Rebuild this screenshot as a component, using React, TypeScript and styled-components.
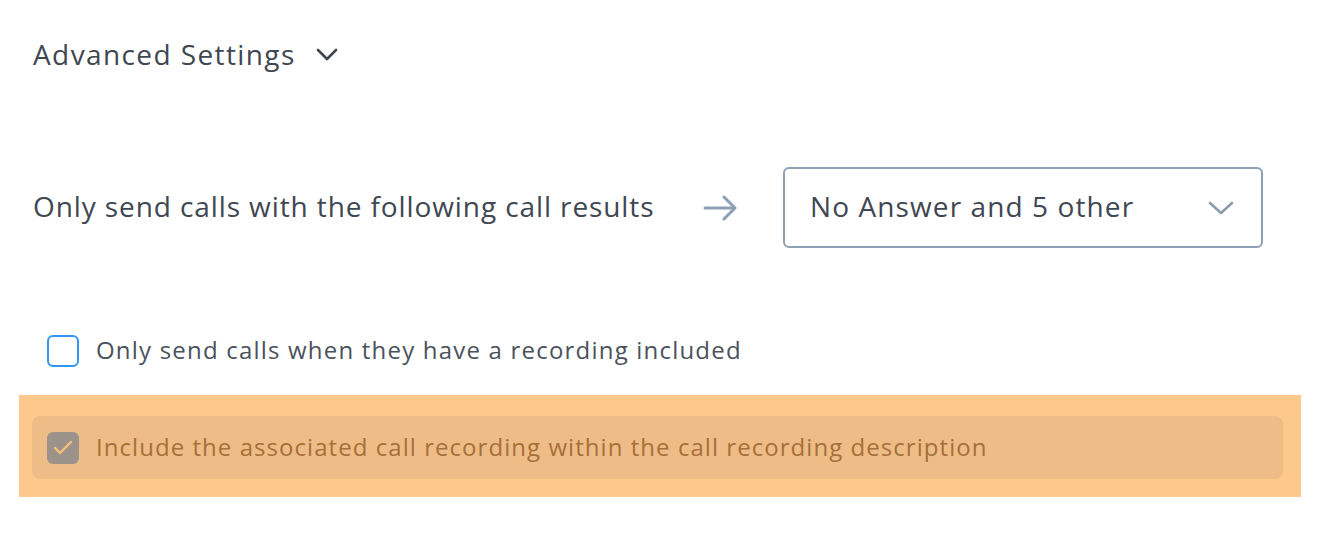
import React from "react";
import styled, { createGlobalStyle } from "styled-components";

const GlobalStyle = createGlobalStyle`
  body {
    margin: 0;
    background: #ffffff;
    font-family: "Open Sans", Lato, sans-serif;
    color: #3e4752;
  }
`;

const App = () => {
    return (
        <>
            <GlobalStyle />
            <Page>
                <Header>
                    <HeaderTitle>Advanced Settings</HeaderTitle>
                    <svg width="22" height="14" viewBox="0 0 22 14">
                        <polyline points="2,3 11,12 20,3" fill="none" stroke="#3f4650" strokeWidth="2.6" strokeLinecap="round" strokeLinejoin="round" />
                    </svg>
                </Header>

                <ResultsRow>
                    <RowLabel>Only send calls with the following call results</RowLabel>
                    <ArrowCell>
                        <svg width="34" height="26" viewBox="0 0 34 26">
                            <line x1="2" y1="13" x2="31" y2="13" stroke="#8e9fb5" strokeWidth="3" strokeLinecap="round" />
                            <polyline points="21,2 32,13 21,24" fill="none" stroke="#8e9fb5" strokeWidth="3" strokeLinecap="round" strokeLinejoin="round" />
                        </svg>
                    </ArrowCell>
                    <Select>
                        <SelectValue>No Answer and 5 other</SelectValue>
                        <svg width="26" height="14" viewBox="0 0 26 14">
                            <polyline points="2,2 13,12 24,2" fill="none" stroke="#8d9bb0" strokeWidth="2.6" strokeLinecap="round" strokeLinejoin="round" />
                        </svg>
                    </Select>
                </ResultsRow>

                <CheckRow>
                    <Checkbox />
                    <CheckLabel>Only send calls when they have a recording included</CheckLabel>
                </CheckRow>

                <Highlight>
                    <DisabledRow>
                        <Checkbox checked>
                            <svg width="20" height="16" viewBox="0 0 20 16">
                                <polyline points="2,8 7,13 18,2" fill="none" stroke="#fbbf7c" strokeWidth="2.4" strokeLinecap="round" strokeLinejoin="round" />
                            </svg>
                        </Checkbox>
                        <CheckLabel muted>Include the associated call recording within the call recording description</CheckLabel>
                    </DisabledRow>
                </Highlight>
            </Page>
        </>
    );
};

const Page = styled.div`
    padding: 28px 40px 0 19px;
`

const Header = styled.div`
    display: flex;
    align-items: center;
    gap: 20px;
    height: 52px;
    padding-left: 14px;
`

const HeaderTitle = styled.span`
    font-size: 28px;
    letter-spacing: 1.4px;
    color: #3e4752;
`

const ResultsRow = styled.div`
    display: grid;
    grid-template-columns: 670px 80px 480px;
    align-items: center;
    margin-top: 87px;
    padding-left: 14px;
`

const RowLabel = styled.span`
    font-size: 28px;
    letter-spacing: 0.9px;
    padding-bottom: 4px;
    color: #3e4752;
`

const ArrowCell = styled.div`
    display: flex;
    align-items: center;
`

const Select = styled.div`
    box-sizing: border-box;
    height: 81px;
    border: 2px solid #8fa0b4;
    border-radius: 6px;
    display: flex;
    align-items: center;
    justify-content: space-between;
    padding: 0 27px 0 25px;
`

const SelectValue = styled.span`
    font-size: 28px;
    letter-spacing: 1.1px;
    padding-bottom: 4px;
    color: #3e4752;
`

const CheckRow = styled.div`
    display: flex;
    align-items: center;
    gap: 17px;
    margin-top: 87px;
    padding-left: 28px;
`

const Checkbox = styled.div<{ checked?: boolean }>`
    box-sizing: border-box;
    width: 32px;
    height: 32px;
    border-radius: 6px;
    border: ${p => p.checked ? "none" : "2px solid #3196f5"};
    background: ${p => p.checked ? "#9b9389" : "#ffffff"};
    display: flex;
    align-items: center;
    justify-content: center;
    flex: 0 0 auto;
`

const CheckLabel = styled.span<{ muted?: boolean }>`
    font-size: 24px;
    line-height: 28px;
    letter-spacing: ${p => p.muted ? "1.05px" : "1.2px"};
    padding-bottom: 2px;
    color: ${p => p.muted ? "#a6703a" : "#4a525c"};
`

const Highlight = styled.div`
    margin-top: 28px;
    background: #fdc88b;
    padding: 21px 18px 18px 13px;
`

const DisabledRow = styled.div`
    display: flex;
    align-items: center;
    gap: 17px;
    height: 63px;
    padding-left: 15px;
    background: #eebd87;
    border-radius: 8px;
`

export default App
